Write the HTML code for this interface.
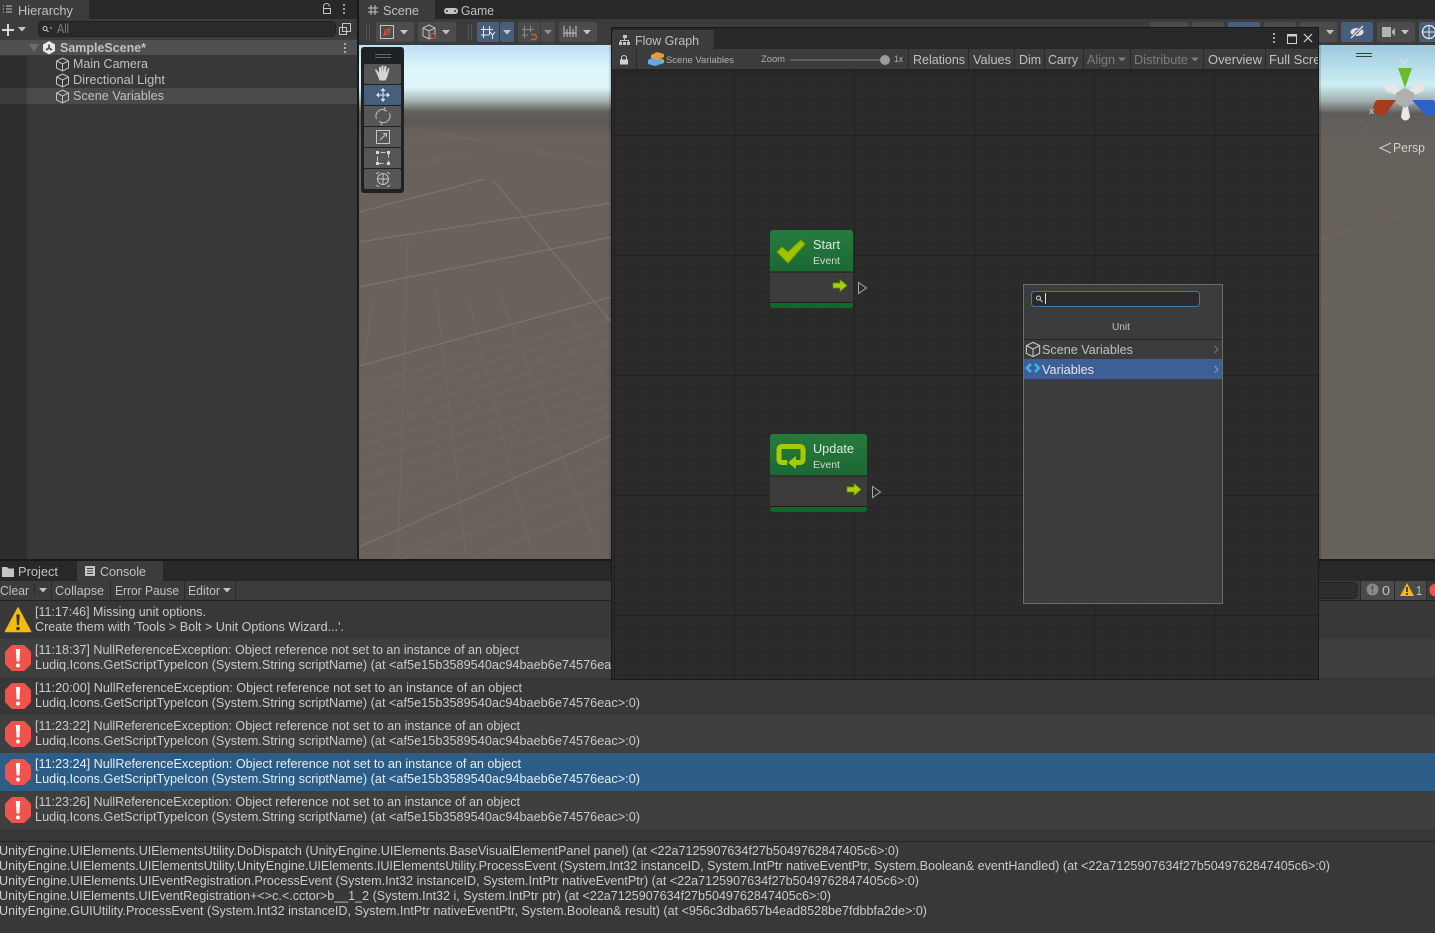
<!DOCTYPE html>
<html><head><meta charset="utf-8"><title>Unity Editor</title>
<style>
html,body{margin:0;padding:0;background:#282828;width:1435px;height:933px;overflow:hidden}
svg{display:block}
text{font-family:"Liberation Sans",sans-serif;font-size:12.5px;fill:#c0c0c0;white-space:pre}
.d{fill:#cacaca}
.w{fill:#e4eef6}
.s{font-size:9px;fill:#b0b0b0}
.g{fill:#7c7c7c}
.b{font-weight:bold}
</style></head><body>
<svg width="1435" height="933" viewBox="0 0 1435 933" xmlns="http://www.w3.org/2000/svg">
<defs>
<linearGradient id="sky" x1="0" y1="45" x2="0" y2="140" gradientUnits="userSpaceOnUse">
<stop offset="0" stop-color="#bde0f5"/><stop offset=".25" stop-color="#dcf6fb"/><stop offset=".45" stop-color="#dcf4f6"/><stop offset=".58" stop-color="#a9b6b6"/><stop offset=".7" stop-color="#64625f"/><stop offset=".8" stop-color="#5c5855"/><stop offset="1" stop-color="#6c655f"/>
</linearGradient>
<linearGradient id="sky2" x1="0" y1="45" x2="0" y2="140" gradientUnits="userSpaceOnUse">
<stop offset="0" stop-color="#9cc9de"/><stop offset=".42" stop-color="#cdeef3"/><stop offset=".58" stop-color="#a4b2b3"/><stop offset=".72" stop-color="#5f5d5b"/><stop offset="1" stop-color="#67615c"/>
</linearGradient>
<linearGradient id="hd" x1="0" y1="0" x2="0" y2="1"><stop offset="0" stop-color="#277b3e"/><stop offset="1" stop-color="#1c6833"/></linearGradient>
<pattern id="minor" width="12" height="12" patternUnits="userSpaceOnUse" x="2" y="3"><path d="M0 .5H12M.5 0V12" stroke="#272727" fill="none"/></pattern>
<pattern id="major" width="120" height="120" patternUnits="userSpaceOnUse" x="14" y="15"><path d="M0 .5H120M.5 0V120" stroke="#212121" fill="none"/></pattern>
<clipPath id="winclip"><rect x="612" y="28" width="706" height="652"/></clipPath>
<g id="cube" fill="none" stroke="#c4c4c4" stroke-width="1"><path d="M0 -6.500L6 -3.500V3.500L0 6.500L-6 3.500V-3.500Z M-6 -3.500L0 -0.500L6 -3.500 M0 -0.500V6.500"/></g>
<g id="err"><path d="M-6 -12.500H6L12.500 -6V6L6 12.500H-6L-12.500 6V-6Z" fill="#f0524c" stroke="#f0524c" stroke-linejoin="round"/><path d="M-2.200 -9H2.200L1.400 3.500H-1.400Z" fill="#fff"/><circle cx="0" cy="7.500" r="2" fill="#fff"/></g>
<g id="caret"><path d="M-4 -2H4L0 2.500Z" fill="#c4c4c4"/></g>
<g id="arrow"><path d="M0 3.500H7V0L14 6L7 12V8.500H0Z" fill="#a6d008" stroke="#6c8a04" stroke-width=".7"/></g>
</defs>

<!-- base -->
<rect width="1435" height="933" fill="#282828"/>

<!-- Hierarchy -->
<rect x="0" y="0" width="89" height="19" fill="#3c3c3c"/>
<path d="M3 6h1M3 9h1M3 12h1M6 6h6M6 9h6M6 12h6" stroke="#c4c4c4" fill="none"/>
<text x="18" y="15" textLength="55" lengthAdjust="spacingAndGlyphs">Hierarchy</text>
<path d="M323.500 8.500v-2a3 3 0 0 1 6 0" stroke="#c4c4c4" fill="none"/><rect x="323.500" y="8.500" width="7" height="5" fill="none" stroke="#c4c4c4"/>
<path d="M344 4v2M344 8v2M344 12v2" stroke="#c4c4c4" stroke-width="1.500"/>
<rect x="0" y="19" width="357" height="21" fill="#3c3c3c"/>
<path d="M8 24v12M2 30h12" stroke="#d8d8d8" stroke-width="2"/>
<use href="#caret" x="22" y="29"/>
<rect x="38.500" y="21.500" width="297" height="15" rx="4" fill="#2a2a2a" stroke="#212121"/>
<circle cx="45" cy="28.500" r="2" fill="none" stroke="#c4c4c4"/><path d="M46.500 30l2 2M50 28h2" stroke="#c4c4c4"/>
<text x="57" y="33" class="g" textLength="12" lengthAdjust="spacingAndGlyphs">All</text>
<rect x="336" y="21" width="21" height="16" fill="#383838"/>
<rect x="339.500" y="27.500" width="7" height="7" fill="none" stroke="#c4c4c4"/><rect x="342.500" y="23.500" width="8" height="8" fill="none" stroke="#c4c4c4"/>
<rect x="0" y="40" width="357" height="519" fill="#383838"/>
<rect x="0" y="56" width="27" height="503" fill="#2e2e2e"/>
<rect x="0" y="40" width="357" height="15" fill="#505050"/>
<rect x="0" y="88" width="27" height="16" fill="#3c3c3c"/>
<rect x="27" y="88" width="330" height="16" fill="#4a4a4a"/>
<path d="M29 44h10l-5 8Z" fill="#6e6e6e"/>
<path d="M49 41L55 44.500V51L49 54.500L43 51V44.500Z" fill="#e8e8e8"/>
<path d="M49 44.500V48M49 48L46 50M49 48L52 50" stroke="#505050" stroke-width="1.800"/>
<text x="60" y="52" class="b" textLength="86" lengthAdjust="spacingAndGlyphs">SampleScene*</text>
<path d="M345 43v2M345 47v2M345 51v2" stroke="#c4c4c4" stroke-width="1.500"/>
<use href="#cube" x="62.500" y="64.500"/><text x="73" y="68" textLength="75" lengthAdjust="spacingAndGlyphs">Main Camera</text>
<use href="#cube" x="62.500" y="80.500"/><text x="73" y="84" textLength="92" lengthAdjust="spacingAndGlyphs">Directional Light</text>
<use href="#cube" x="62.500" y="96.500"/><text x="73" y="100" textLength="91" lengthAdjust="spacingAndGlyphs">Scene Variables</text>
<rect x="357" y="0" width="2" height="559" fill="#191919"/>

<!-- Scene tabs + toolbar -->
<rect x="359" y="0" width="76" height="19" fill="#3c3c3c"/>
<path d="M371 5v10M375 5v10M368 8h10M368 12h10" stroke="#c4c4c4" fill="none"/>
<text x="383" y="15" textLength="36" lengthAdjust="spacingAndGlyphs">Scene</text>
<rect x="444" y="8" width="14" height="6" rx="3" fill="#c4c4c4"/><circle cx="447" cy="11" r="1" fill="#333"/><circle cx="455" cy="11" r="1" fill="#333"/>
<text x="461" y="15" textLength="33" lengthAdjust="spacingAndGlyphs">Game</text>
<rect x="359" y="19" width="1076" height="26" fill="#3c3c3c"/>
<path d="M366.500 24v16M369.500 24v16" stroke="#555"/>
<rect x="376" y="22" width="38" height="20" rx="2" fill="#4c4c4c"/>
<rect x="380.500" y="25.500" width="13" height="13" fill="none" stroke="#c4c4c4"/>
<path d="M383 36l8 -8" stroke="#e2593b"/><circle cx="387" cy="32" r="2.500" fill="none" stroke="#e2593b"/>
<use href="#caret" x="404" y="32"/>
<rect x="418" y="22" width="38" height="20" rx="2" fill="#4c4c4c"/>
<path d="M429 25L435 28V36L429 39L423 36V28Z M423 28L429 31L435 28 M429 31V39" fill="none" stroke="#c4c4c4"/>
<circle cx="433" cy="36" r="2.500" fill="#4c4c4c" stroke="#e2593b"/>
<use href="#caret" x="446" y="32"/>
<path d="M468.500 24v16M471.500 24v16" stroke="#555"/>
<rect x="477" y="22" width="22" height="20" rx="2" fill="#46607c"/>
<rect x="500" y="22" width="14" height="20" rx="2" fill="#46607c"/>
<path d="M483.500 26v12M489.500 26v9M481 29.500h12M481 35h8M490 32l2.500 3 2.500 -3M492.500 35v4" stroke="#e8e8e8" fill="none"/>
<use href="#caret" x="507" y="32"/>
<rect x="518" y="22" width="22" height="20" rx="2" fill="#4a4a4a"/>
<rect x="541" y="22" width="14" height="20" rx="2" fill="#4a4a4a"/>
<path d="M524.500 26v12M530.500 26v6M522 29.500h12M522 35h6" stroke="#8a8a8a" fill="none"/>
<path d="M531 34.500h3a2.500 2.500 0 0 1 0 5h-3" stroke="#c4603a" stroke-width="1.500" fill="none"/>
<use href="#caret" x="548" y="32" opacity=".6"/>
<rect x="559" y="22" width="38" height="20" rx="2" fill="#4c4c4c"/>
<path d="M564 26v11M567 29v8M570 26v11M573 29v8M576 26v11M564 33h12" stroke="#c4c4c4" fill="none"/>
<use href="#caret" x="587" y="32"/>

<rect x="1150" y="22" width="38" height="20" rx="2" fill="#4c4c4c"/>
<rect x="1192" y="22" width="32" height="20" rx="2" fill="#4c4c4c"/>
<rect x="1228" y="22" width="32" height="20" rx="2" fill="#46607c"/>
<rect x="1264" y="22" width="32" height="20" rx="2" fill="#4c4c4c"/>
<rect x="1300" y="22" width="37" height="20" rx="2" fill="#4c4c4c"/>
<use href="#caret" x="1330" y="32"/>
<rect x="1341" y="22" width="32" height="20" rx="2" fill="#46607c"/>
<ellipse cx="1357" cy="32" rx="6.500" ry="4" fill="#e0e0e0"/><circle cx="1357" cy="32" r="2" fill="#46607c"/><path d="M1351 38l12 -12" stroke="#46607c" stroke-width="3"/><path d="M1351 38l12 -12" stroke="#e0e0e0" stroke-width="1.300"/>
<rect x="1377" y="22" width="38" height="20" rx="2" fill="#4c4c4c"/>
<rect x="1382" y="27" width="9" height="10" fill="#b4b4b4"/><path d="M1392 31l3 -3v8l-3 -3Z" fill="#b4b4b4"/>
<use href="#caret" x="1405" y="32"/>
<rect x="1419" y="22" width="20" height="20" rx="2" fill="#46607c"/>
<circle cx="1429" cy="32" r="6.500" fill="none" stroke="#e8e8e8" stroke-width="1.300"/><path d="M1423 32h12M1429 26v12" stroke="#e8e8e8"/>

<!-- Scene view -->
<rect x="359" y="45" width="253" height="514" fill="url(#sky)"/>
<rect x="359" y="140" width="253" height="419" fill="#69625c"/>
<rect x="1318" y="45" width="117" height="95" fill="url(#sky2)"/>
<rect x="1318" y="140" width="117" height="419" fill="#67615c"/>
<rect x="1318" y="45" width="3" height="514" fill="#000" opacity=".15"/>
<rect x="609" y="45" width="3" height="514" fill="#000" opacity=".12"/>
<g stroke="#8a857e" fill="none" stroke-width="1" opacity=".6">
<path d="M359 212L485 179M359 242L612 203M359 287L612 237M359 366L612 297M359 547L612 435M493 180L612 323"/>
</g>
<g stroke="#807b75" fill="none" stroke-width="1" opacity=".28">
<path d="M359 178L470 152M410 128L612 165M1373 117L1348 153M1318 240L1435 205M1318 300L1435 270"/>
<path d="M372 300L365 360M408 240L398 557M436 290L466 557M468 297L533 557M498 290L601 557M560 300L612 390"/>
<path d="M359 385L612 318M359 395L612 330M359 405L612 342M359 418L612 352M359 430L612 364M359 445L612 378M359 460L612 392M359 478L612 405M359 497L612 415M359 520L612 425M359 572L612 458M400 559L612 482M470 559L612 505"/>
</g>

<!-- Tools -->
<rect x="361" y="47" width="43" height="146" rx="3" fill="#1f2224"/>
<path d="M375 54.500h16M375 57.500h16" stroke="#6a6a6a"/>
<g fill="#565656"><rect x="364" y="64" width="37" height="20" rx="2"/><rect x="364" y="106" width="37" height="20"/><rect x="364" y="127" width="37" height="20"/><rect x="364" y="148" width="37" height="20"/><rect x="364" y="169" width="37" height="20" rx="2"/></g>
<rect x="364" y="85" width="37" height="20" fill="#46607c"/>
<path d="M377 74l-2 -4 1 -1 3 4v-6l2 0 .5 5v-6.500h2v6.500l1 -6h2l-.5 7 2 -5 1.500 .5-2 8-2 4h-6Z" fill="#d4d4d4"/>
<path d="M383 88l-2.500 3h5ZM383 102l-2.500 -3h5ZM376 95l3 -2.500v5ZM390 95l-3 -2.500v5Z" fill="#e0e6ec"/><path d="M383 90v10M378 95h10" stroke="#e0e6ec"/>
<path d="M376.500 119a7 7 0 0 1 8 -9.500M389.500 113a7 7 0 0 1 -8 9.500M385 107l-1 3 3 1M381 125.500l1 -3 -3 -1" fill="none" stroke="#bdbdbd"/>
<rect x="376.500" y="130.500" width="13" height="13" fill="none" stroke="#c4c4c4"/><path d="M380 140l6 -6M383 133.500h3.500V137" fill="none" stroke="#c4c4c4"/>
<rect x="377.500" y="152.500" width="11" height="11" fill="none" stroke="#c4c4c4" stroke-dasharray="5 3" stroke-dashoffset="-3"/><g fill="#d8d8d8"><rect x="376" y="151" width="3" height="3"/><rect x="387" y="151" width="3" height="3"/><rect x="376" y="162" width="3" height="3"/><rect x="387" y="162" width="3" height="3"/></g>
<circle cx="383" cy="179" r="5.500" fill="none" stroke="#c4c4c4"/><path d="M383 173v12M377 179h12M376 174l3 -2M390 174l-3 -2M376 185l3 2M390 185l-3 2" stroke="#c4c4c4" fill="none"/>

<!-- Gizmo -->
<path d="M1356 53.500h16M1356 56.500h16" stroke="#3c3c3c"/>
<text x="1400" y="64" class="s" textLength="8" lengthAdjust="spacingAndGlyphs" style="fill:#dde;font-size:10px">y</text>
<path d="M1398 68h14l-7 20Z" fill="#6cbb2c"/>
<path d="M1399 96L1389 92A5 5 0 0 1 1385 87A5 5 0 0 1 1393 84L1401 90Z" fill="#e6e6e6"/>
<path d="M1411 96L1421 92A5 5 0 0 0 1425 87A5 5 0 0 0 1417 84L1409 90Z" fill="#e6e6e6"/>
<path d="M1403.500 105L1401 116A4.500 4.500 0 0 0 1410 116L1407.500 105Z" fill="#e8e8e8"/>
<path d="M1405 88l9 5v10l-9 5-9 -5v-10Z" fill="#b0b0b0"/>
<path d="M1377 100L1396 100L1384 116A9 9 0 0 1 1377 100Z" fill="#a83a20"/>
<path d="M1433 100L1412 100L1426 116A9 9 0 0 0 1433 100Z" fill="#2f5fc8"/>
<text x="1369" y="114" class="s" textLength="5" lengthAdjust="spacingAndGlyphs" style="fill:#d8d8d8">x</text>
<path d="M1391 143l-11 5 11 5" fill="none" stroke="#d0d0d0"/>
<text x="1393" y="152" textLength="32" lengthAdjust="spacingAndGlyphs" style="fill:#d0d0d0">Persp</text>

<!-- Bottom panel -->
<rect x="0" y="559" width="1435" height="2" fill="#191919"/>
<rect x="0" y="561" width="1435" height="20" fill="#282828"/>
<rect x="77" y="561" width="86" height="20" fill="#3c3c3c"/>
<path d="M2 567h5l1.500 1.500H14V577H2Z" fill="#c4c4c4"/>
<text x="18" y="576" textLength="40" lengthAdjust="spacingAndGlyphs">Project</text>
<rect x="85" y="566" width="10" height="10" fill="#c4c4c4"/><path d="M87 568.500h6M87 571h6M87 573.500h6" stroke="#3c3c3c"/>
<text x="100" y="576" textLength="46" lengthAdjust="spacingAndGlyphs">Console</text>
<rect x="0" y="581" width="1435" height="20" fill="#3c3c3c"/>
<rect x="0" y="600" width="1435" height="1" fill="#232323"/>
<text x="0" y="595" textLength="29" lengthAdjust="spacingAndGlyphs">Clear</text>
<path d="M34.500 584v11" stroke="#2a2a2a"/>
<use href="#caret" x="43" y="590"/>
<path d="M51.500 581v19M110.500 581v19M184.500 581v19M235.500 581v19" stroke="#2a2a2a"/>
<text x="55" y="595" textLength="49" lengthAdjust="spacingAndGlyphs">Collapse</text>
<text x="115" y="595" textLength="64" lengthAdjust="spacingAndGlyphs">Error Pause</text>
<text x="188" y="595" textLength="32" lengthAdjust="spacingAndGlyphs">Editor</text>
<use href="#caret" x="227" y="590"/>
<rect x="1280" y="582.500" width="77" height="16" rx="4" fill="#2e2e2e" stroke="#222"/>
<path d="M1360.500 581v19M1394.500 581v19M1426.500 581v19" stroke="#2a2a2a"/>
<rect x="1361" y="581" width="33" height="19" fill="#4a4a4a"/><rect x="1395" y="581" width="31" height="19" fill="#4a4a4a"/>
<circle cx="1372.500" cy="589.500" r="6" fill="#8a8a8a"/><path d="M1372.500 585.500v4.500M1372.500 591.500v1.500" stroke="#4a4a4a" stroke-width="1.500"/>
<text x="1382" y="595" textLength="8" lengthAdjust="spacingAndGlyphs">0</text>
<path d="M1407 583l7 13h-14Z" fill="#f6b90e"/><path d="M1407 587v5M1407 593v2" stroke="#222" stroke-width="1.500"/>
<text x="1416" y="595" textLength="6" lengthAdjust="spacingAndGlyphs">1</text>
<circle cx="1436" cy="590" r="6.500" fill="#f0524c"/>

<!-- Log rows -->
<rect x="0" y="601" width="1435" height="332" fill="#383838"/>
<rect x="0" y="639" width="1435" height="38" fill="#3f3f3f"/>
<rect x="0" y="715" width="1435" height="38" fill="#3f3f3f"/>
<rect x="0" y="753" width="1435" height="38" fill="#2c5d87"/>
<rect x="0" y="791" width="1435" height="38" fill="#3f3f3f"/>
<path d="M18 608L30.500 631.500H5.500Z" fill="#f6b90e" stroke="#f6b90e" stroke-width="1.500" stroke-linejoin="round"/><path d="M16.300 614.500h3.400L19 625h-2Z" fill="#333"/><circle cx="18" cy="628.500" r="1.800" fill="#333"/>
<text x="35" y="616" class="d" textLength="171" lengthAdjust="spacingAndGlyphs">[11:17:46] Missing unit options.</text>
<text x="35" y="631" class="d" textLength="309" lengthAdjust="spacingAndGlyphs">Create them with 'Tools &gt; Bolt &gt; Unit Options Wizard...'.</text>

<use href="#err" x="18" y="658"/>
<text x="35" y="654" class="d" textLength="484" lengthAdjust="spacingAndGlyphs">[11:18:37] NullReferenceException: Object reference not set to an instance of an object</text>
<text x="35" y="669" class="d" textLength="605" lengthAdjust="spacingAndGlyphs">Ludiq.Icons.GetScriptTypeIcon (System.String scriptName) (at &lt;af5e15b3589540ac94baeb6e74576eac&gt;:0)</text>
<use href="#err" x="18" y="696"/>
<text x="35" y="692" class="d" textLength="487" lengthAdjust="spacingAndGlyphs">[11:20:00] NullReferenceException: Object reference not set to an instance of an object</text>
<text x="35" y="707" class="d" textLength="605" lengthAdjust="spacingAndGlyphs">Ludiq.Icons.GetScriptTypeIcon (System.String scriptName) (at &lt;af5e15b3589540ac94baeb6e74576eac&gt;:0)</text>
<use href="#err" x="18" y="734"/>
<text x="35" y="730" class="d" textLength="485" lengthAdjust="spacingAndGlyphs">[11:23:22] NullReferenceException: Object reference not set to an instance of an object</text>
<text x="35" y="745" class="d" textLength="605" lengthAdjust="spacingAndGlyphs">Ludiq.Icons.GetScriptTypeIcon (System.String scriptName) (at &lt;af5e15b3589540ac94baeb6e74576eac&gt;:0)</text>
<use href="#err" x="18" y="772"/>
<text x="35" y="768" class="w" textLength="486" lengthAdjust="spacingAndGlyphs">[11:23:24] NullReferenceException: Object reference not set to an instance of an object</text>
<text x="35" y="783" class="w" textLength="605" lengthAdjust="spacingAndGlyphs">Ludiq.Icons.GetScriptTypeIcon (System.String scriptName) (at &lt;af5e15b3589540ac94baeb6e74576eac&gt;:0)</text>
<use href="#err" x="18" y="810"/>
<text x="35" y="806" class="d" textLength="485" lengthAdjust="spacingAndGlyphs">[11:23:26] NullReferenceException: Object reference not set to an instance of an object</text>
<text x="35" y="821" class="d" textLength="605" lengthAdjust="spacingAndGlyphs">Ludiq.Icons.GetScriptTypeIcon (System.String scriptName) (at &lt;af5e15b3589540ac94baeb6e74576eac&gt;:0)</text>

<rect x="0" y="841" width="1435" height="1" fill="#232323"/>
<text x="-1" y="855" class="d" textLength="900" lengthAdjust="spacingAndGlyphs">UnityEngine.UIElements.UIElementsUtility.DoDispatch (UnityEngine.UIElements.BaseVisualElementPanel panel) (at &lt;22a7125907634f27b5049762847405c6&gt;:0)</text>
<text x="-1" y="870" class="d" textLength="1331" lengthAdjust="spacingAndGlyphs">UnityEngine.UIElements.UIElementsUtility.UnityEngine.UIElements.IUIElementsUtility.ProcessEvent (System.Int32 instanceID, System.IntPtr nativeEventPtr, System.Boolean&amp; eventHandled) (at &lt;22a7125907634f27b5049762847405c6&gt;:0)</text>
<text x="-1" y="885" class="d" textLength="920" lengthAdjust="spacingAndGlyphs">UnityEngine.UIElements.UIEventRegistration.ProcessEvent (System.Int32 instanceID, System.IntPtr nativeEventPtr) (at &lt;22a7125907634f27b5049762847405c6&gt;:0)</text>
<text x="-1" y="900" class="d" textLength="832" lengthAdjust="spacingAndGlyphs">UnityEngine.UIElements.UIEventRegistration+&lt;&gt;c.&lt;.cctor&gt;b__1_2 (System.Int32 i, System.IntPtr ptr) (at &lt;22a7125907634f27b5049762847405c6&gt;:0)</text>
<text x="-1" y="915" class="d" textLength="928" lengthAdjust="spacingAndGlyphs">UnityEngine.GUIUtility.ProcessEvent (System.Int32 instanceID, System.IntPtr nativeEventPtr, System.Boolean&amp; result) (at &lt;956c3dba657b4ead8528be7fdbbfa2de&gt;:0)</text>

<!-- Flow Graph window -->
<rect x="611.500" y="27.500" width="707" height="652" fill="#2b2b2b" stroke="#191919"/>
<rect x="612" y="28" width="706" height="21" fill="#282828"/>
<rect x="612" y="30" width="102" height="19" rx="2" fill="#3c3c3c"/>
<rect x="623" y="35" width="4" height="3" fill="#c4c4c4"/><rect x="619" y="42" width="3" height="3" fill="#c4c4c4"/><rect x="623" y="42" width="3" height="3" fill="#c4c4c4"/><rect x="627" y="42" width="3" height="3" fill="#c4c4c4"/><path d="M624.500 38v3M620.500 42v-1.500h8V42" fill="none" stroke="#c4c4c4"/>
<text x="635" y="45" textLength="64" lengthAdjust="spacingAndGlyphs">Flow Graph</text>
<path d="M1274 33v2M1274 37v2M1274 41v2" stroke="#d0d0d0" stroke-width="1.500"/>
<rect x="1287.500" y="34.500" width="9" height="9" fill="none" stroke="#d0d0d0"/><path d="M1287.500 35.500h9" stroke="#d0d0d0" stroke-width="2"/>
<path d="M1304 34l8 8M1312 34l-8 8" stroke="#d8d8d8" stroke-width="1.200"/>
<rect x="612" y="49" width="706" height="20" fill="#3c3c3c"/>
<rect x="612" y="70" width="706" height="609" fill="url(#minor)"/>
<rect x="612" y="70" width="706" height="609" fill="url(#major)"/>
<rect x="612" y="69" width="706" height="1" fill="#232323"/>
<rect x="612" y="70" width="706" height="3" fill="#1c1c1c" opacity=".35"/>
<path d="M621.500 59.500v-1.500a2.500 2.500 0 0 1 5 0v1.500" fill="none" stroke="#d0d0d0"/><rect x="620" y="59.500" width="8" height="5" fill="#d0d0d0"/>
<path d="M636.500 49v20" stroke="#2a2a2a"/>
<path d="M648 60l6 -3 7 2v5l-6 2-7 -2Z" fill="#5ea9ea"/><path d="M661 58l3 2v3l-3 1Z" fill="#8ac43c"/><path d="M651 55l6 -3 7 2v3l-7 3-6 -2Z" fill="#ea9a3a"/>
<text x="666" y="63" class="s" textLength="68" lengthAdjust="spacingAndGlyphs">Scene Variables</text>
<text x="761" y="62" class="s" textLength="24" lengthAdjust="spacingAndGlyphs">Zoom</text>
<rect x="790" y="59" width="95" height="2" fill="#5e5e5e"/><circle cx="885" cy="60" r="5" fill="#9c9c9c"/>
<text x="894" y="62" class="s" textLength="9" lengthAdjust="spacingAndGlyphs">1x</text>
<path d="M908.500 49v20M968.500 49v20M1014.500 49v20M1044.500 49v20M1083.500 49v20M1130.500 49v20M1203.500 49v20M1265.500 49v20" stroke="#2a2a2a"/>
<text x="913" y="64" textLength="52" lengthAdjust="spacingAndGlyphs">Relations</text>
<text x="973" y="64" textLength="38" lengthAdjust="spacingAndGlyphs">Values</text>
<text x="1019" y="64" textLength="22" lengthAdjust="spacingAndGlyphs">Dim</text>
<text x="1048" y="64" textLength="30" lengthAdjust="spacingAndGlyphs">Carry</text>
<text x="1087" y="64" class="g" textLength="28" lengthAdjust="spacingAndGlyphs">Align</text>
<path d="M1118 57.500h8l-4 4Z" fill="#7c7c7c"/>
<text x="1134" y="64" class="g" textLength="54" lengthAdjust="spacingAndGlyphs">Distribute</text>
<path d="M1191 57.500h8l-4 4Z" fill="#7c7c7c"/>
<text x="1208" y="64" textLength="54" lengthAdjust="spacingAndGlyphs">Overview</text>
<g clip-path="url(#winclip)"><text x="1269" y="64" textLength="66" lengthAdjust="spacingAndGlyphs">Full Screen</text></g>

<!-- Start node -->
<rect x="770" y="230" width="83" height="78" rx="3" fill="#0c6a2b"/>
<path d="M770 272V233a3 3 0 0 1 3 -3h77a3 3 0 0 1 3 3V272Z" fill="url(#hd)"/>
<rect x="770" y="272" width="83" height="30" fill="#3c3c3c"/>
<path d="M770 272h83M770 302.500h83" stroke="#1d1d1d"/>
<path d="M777 252L782 247L788 252L801 240L805 244L788 263Z" fill="#9cc400" stroke="#7a9a04"/>
<text x="813" y="249" style="fill:#dfe8df" textLength="27" lengthAdjust="spacingAndGlyphs">Start</text>
<text x="813" y="264" class="s" style="fill:#d0dcd2;font-size:10px" textLength="27" lengthAdjust="spacingAndGlyphs">Event</text>
<use href="#arrow" x="833" y="279.500"/>
<path d="M858.500 282.500L866.500 288L858.500 293.500Z" fill="none" stroke="#a8a8a8"/>

<!-- Update node -->
<rect x="770" y="434" width="97" height="78" rx="3" fill="#0c6a2b"/>
<path d="M770 476V437a3 3 0 0 1 3 -3h91a3 3 0 0 1 3 3V476Z" fill="url(#hd)"/>
<rect x="770" y="476" width="97" height="30" fill="#3c3c3c"/>
<path d="M770 476h97M770 506.500h97" stroke="#1d1d1d"/>
<path d="M787 462.500h-5a3 3 0 0 1 -3 -3v-10a3 3 0 0 1 3 -3h18a3 3 0 0 1 3 3v10a3 3 0 0 1 -3 3h-7" fill="none" stroke="#a6cc08" stroke-width="5"/>
<path d="M796 456v13l-8 -6.500Z" fill="#a6cc08"/>
<text x="813" y="453" style="fill:#dfe8df" textLength="41" lengthAdjust="spacingAndGlyphs">Update</text>
<text x="813" y="468" class="s" style="fill:#d0dcd2;font-size:10px" textLength="27" lengthAdjust="spacingAndGlyphs">Event</text>
<use href="#arrow" x="847" y="483.500"/>
<path d="M872.500 486.500L880.500 492L872.500 497.500Z" fill="none" stroke="#a8a8a8"/>

<!-- Fuzzy finder -->
<rect x="1023.500" y="284.500" width="199" height="319" fill="#3c3c3c" stroke="#6c6c6c"/>
<rect x="1031.500" y="291.500" width="168" height="15" rx="3" fill="#2a2a2a" stroke="#3a79bb"/>
<circle cx="1038.500" cy="298" r="2" fill="none" stroke="#d0d0d0"/><path d="M1040 299.500l2.500 2.500" stroke="#d0d0d0"/>
<path d="M1045.500 293v11" stroke="#e0e0e0"/>
<text x="1112" y="330" style="font-size:10px;fill:#c0c0c0" textLength="18" lengthAdjust="spacingAndGlyphs">Unit</text>
<rect x="1024" y="339" width="198" height="1" fill="#232323"/>
<use href="#cube" x="1033" y="349.500" transform="translate(-103.300 -34.950) scale(1.100)"/>
<text x="1042" y="354" textLength="91" lengthAdjust="spacingAndGlyphs">Scene Variables</text>
<path d="M1214.500 346l3.500 3.500 -3.500 3.500" fill="none" stroke="#7c7c7c"/>
<rect x="1024" y="359" width="198" height="20" fill="#3e5f96"/>
<path d="M1031 364l-4 4 4 4M1035 364l4 4 -4 4" fill="none" stroke="#3db4ee" stroke-width="2.500"/>
<text x="1042" y="374" style="fill:#e0e6f0" textLength="52" lengthAdjust="spacingAndGlyphs">Variables</text>
<path d="M1214.500 366l3.500 3.500 -3.500 3.500" fill="none" stroke="#8a9ab8"/>
</svg>
</body></html>
